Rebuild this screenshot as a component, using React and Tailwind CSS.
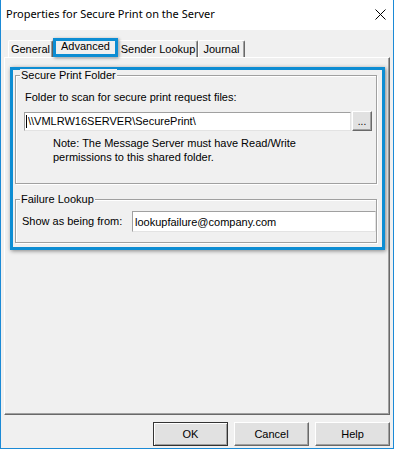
import { useState } from "react";

const tabs = [
  { key: "general", label: "General", width: "w-[45px]" },
  { key: "advanced", label: "Advanced", width: "w-[65px]" },
  { key: "sender", label: "Sender Lookup", width: "w-[80px]" },
  { key: "journal", label: "Journal", width: "w-[47px]" }
];

function CloseIcon() {
  return (
    <svg width="11" height="11" viewBox="0 0 11 11" className="block">
      <path d="M0.5 0.5 L10.5 10.5 M10.5 0.5 L0.5 10.5" stroke="#000" strokeWidth="1" fill="none" />
    </svg>
  );
}

function GroupBox({ title, className = "", children }) {
  return (
    <div className={`relative border border-[#a0a0a0] shadow-[inset_1px_1px_0_#fff,1px_1px_0_#fff] ${className}`}>
      <span className="absolute -top-[7px] left-[4px] bg-[#f0f0f0] px-[1px] leading-[13px]">{title}</span>
      {children}
    </div>
  );
}

function DialogButton({ children, primary = false }) {
  return (
    <button
      className={`h-[24px] w-[75px] bg-[#e1e1e1] leading-none ${
        primary
          ? "border border-[#333] shadow-[inset_1px_1px_0_#fff,inset_-1px_-1px_0_#a0a0a0]"
          : "border border-[#fff] border-r-[#696969] border-b-[#696969] shadow-[inset_-1px_-1px_0_#a0a0a0]"
      }`}
    >
      {children}
    </button>
  );
}

export default function App() {
  const [active, setActive] = useState("advanced");
  const [path, setPath] = useState("\\\\VMLRW16SERVER\\SecurePrint\\");
  const [from, setFrom] = useState("lookupfailure@company.com");

  return (
    <div className="flex h-[449px] w-[394px] flex-col border-x border-b border-[#1b8ad6] bg-[#f0f0f0] font-['Liberation_Sans',Arial,sans-serif] text-[11px] text-black">
      <div className="flex h-[30px] shrink-0 items-center justify-between bg-white pb-[2px] pl-[5px] pr-[7px]">
        <span className="font-['Noto_Sans',sans-serif] text-[11px]">Properties for Secure Print on the Server</span>
        <CloseIcon />
      </div>

      <div className="ml-[3px] w-[386px]">
        <div className="mt-[8px] flex h-[19px] items-end pl-[4px]">
          {tabs.map((tab) =>
            tab.key === active ? (
              <button
                key={tab.key}
                className={`${tab.width} relative z-10 flex h-[19px] items-center justify-center border-[3px] border-[#0d8dd3] bg-[#f0f0f0] pb-[2px] shadow-[1px_1px_3px_rgba(0,0,0,0.45)]`}
              >
                {tab.label}
              </button>
            ) : (
              <button
                key={tab.key}
                onClick={() => setActive(tab.key)}
                className={`${tab.width} flex h-[17px] items-center justify-center rounded-t-[2px] border-l border-t border-white border-r border-r-[#696969] shadow-[inset_-1px_0_0_#a0a0a0]`}
              >
                {tab.label}
              </button>
            )
          )}
        </div>

        <div className="h-[358px] border border-white border-b-[#696969] border-r-[#696969] shadow-[inset_-1px_-1px_0_#a0a0a0]">
          <div className="ml-[5px] mt-[9px] h-[183px] w-[375px] border-[3px] border-[#0d8dd3] shadow-[1px_1px_4px_rgba(0,0,0,0.45)]">
            <GroupBox title="Secure Print Folder" className="ml-[2px] mt-[5px] h-[109px] w-[362px]">
              <div className="ml-[9px] mt-[15px] leading-[13px]">Folder to scan for secure print request files:</div>
              <div className="ml-[8px] mt-[7px] flex items-center gap-[1px]">
                <div className="flex h-[19px] w-[327px] items-center overflow-hidden border border-[#a0a0a0] border-b-[#e3e3e3] border-r-[#e3e3e3] bg-white pl-[1px]">
                  <span className="h-[13px] w-px shrink-0 bg-black" />
                  <input
                    value={path}
                    onChange={(e) => setPath(e.target.value)}
                    className="min-w-0 flex-1 bg-transparent pl-[1px] text-[11px] outline-none"
                  />
                </div>
                <button className="flex h-[20px] w-[20px] items-end justify-center border border-white border-b-[#696969] border-r-[#696969] bg-[#e1e1e1] pb-[3px] text-[10px] leading-none shadow-[inset_-1px_-1px_0_#a0a0a0]">
                  ...
                </button>
              </div>
              <p className="ml-[37px] mt-[5px] leading-[14px]">
                Note: The Message Server must have Read/Write
                <br />
                permissions to this shared folder.
              </p>
            </GroupBox>

            <GroupBox title="Failure Lookup" className="ml-[2px] mt-[15px] h-[44px] w-[362px]">
              <div className="mt-[11px] flex items-center">
                <span className="w-[116px] shrink-0 pl-[6px]">Show as being from:</span>
                <input
                  value={from}
                  onChange={(e) => setFrom(e.target.value)}
                  className="h-[21px] w-[244px] border border-[#a0a0a0] border-b-[#e3e3e3] border-r-[#e3e3e3] bg-white pl-[2px] text-[11px] outline-none"
                />
              </div>
            </GroupBox>
          </div>
        </div>

        <div className="mt-[7px] flex justify-end gap-[6px]">
          <DialogButton primary>OK</DialogButton>
          <DialogButton>Cancel</DialogButton>
          <DialogButton>Help</DialogButton>
        </div>
      </div>
    </div>
  );
}
